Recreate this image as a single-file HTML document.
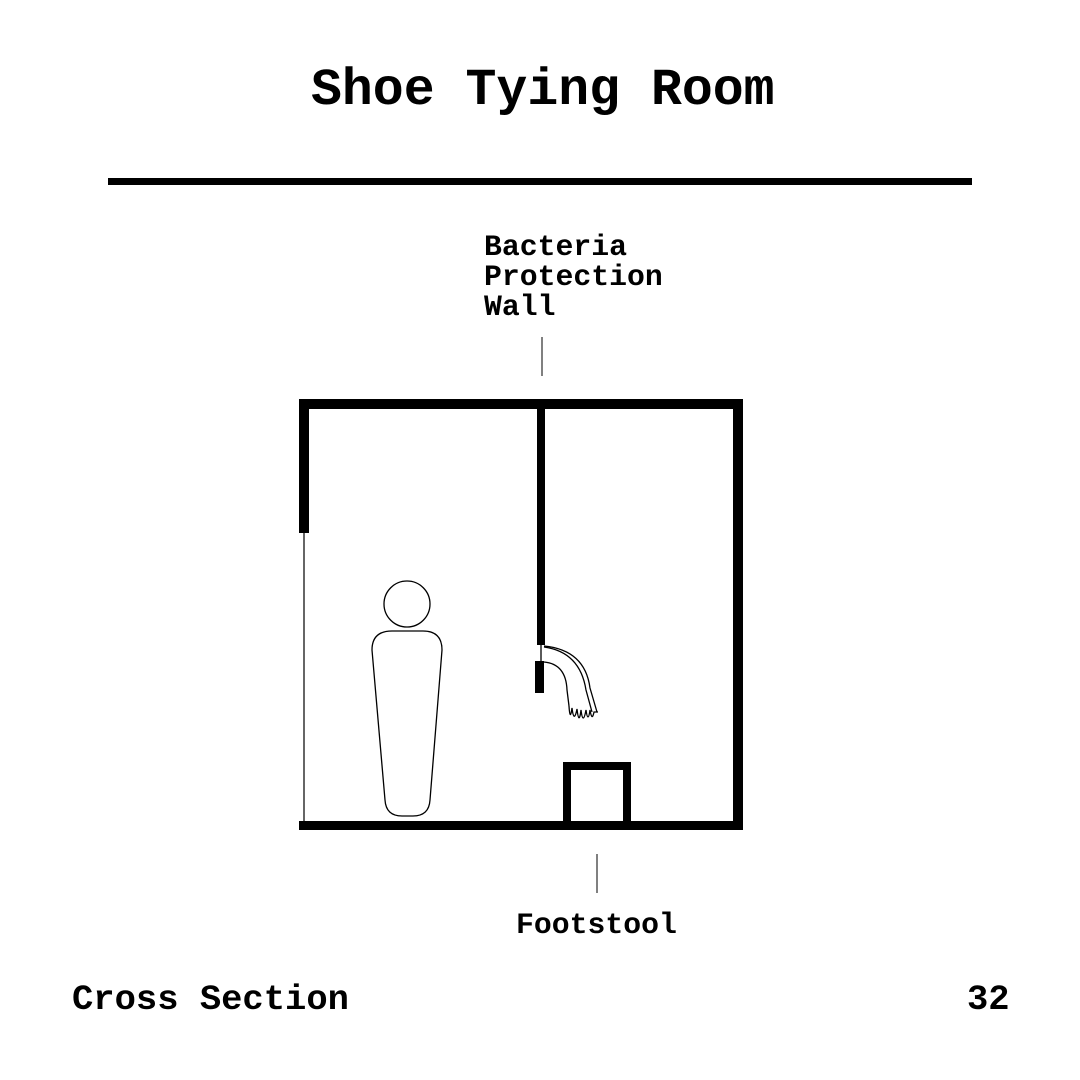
<!DOCTYPE html>
<html><head><meta charset="utf-8"><style>
html,body{margin:0;padding:0;background:#fff;}
body{width:1080px;height:1080px;position:relative;overflow:hidden;font-family:"Liberation Mono",monospace;font-weight:bold;color:#000;}
.t{position:absolute;white-space:nowrap;line-height:1;}
</style></head><body>
<div class="t" style="left:311px;top:66px;font-size:51.5px;">Shoe Tying Room</div>
<div style="position:absolute;left:108px;top:178px;width:864px;height:7px;background:#000;"></div>
<div class="t" style="left:484px;top:232px;font-size:29.8px;line-height:30px;">Bacteria<br>Protection<br>Wall</div>
<div class="t" style="left:516px;top:911px;font-size:29.8px;">Footstool</div>
<div class="t" style="left:72px;top:982px;font-size:35.5px;">Cross Section</div>
<div class="t" style="left:967px;top:982px;font-size:35.5px;">32</div>
<svg width="1080" height="1080" style="position:absolute;left:0;top:0" xmlns="http://www.w3.org/2000/svg">
<g fill="#000">
<rect x="299" y="399" width="444" height="10"/>
<rect x="299" y="399" width="10" height="134"/>
<rect x="733" y="399" width="10" height="431"/>
<rect x="299" y="821" width="444" height="9"/>
<rect x="537" y="409" width="8" height="236"/>
<rect x="535" y="661" width="9" height="32"/>
<rect x="563" y="762" width="68" height="8"/>
<rect x="563" y="762" width="8" height="64"/>
<rect x="623" y="762" width="8" height="64"/>
</g>
<line x1="304" y1="533" x2="304" y2="821" stroke="#000" stroke-width="1.2"/>
<line x1="542" y1="337" x2="542" y2="376" stroke="#000" stroke-width="1"/>
<line x1="597" y1="854" x2="597" y2="893" stroke="#000" stroke-width="1"/>
<g fill="none" stroke="#000" stroke-width="1.3">
<circle cx="407" cy="604" r="23"/>
<path d="M392 631 H423 Q442 631 442 650 L430 800 Q429 816 413 816 H402 Q386 816 385 800 L372 650 Q372 631 392 631 Z"/>
<line x1="541" y1="645" x2="541" y2="661"/>
<path d="M544 646 Q585 650 590 688 L597 712"/>
<path d="M544 647 Q580 652 586 690 L592 712"/>
<path d="M544 662 Q566 664 567 690 L569 706"/>
<path d="M569 706 Q570 722 572 708 Q574 724 577 709 Q579 726 581 710 Q583 726 586 710 Q588 724 590 710 Q592 722 594 712 L598 712"/>
</g>
</svg>
</body></html>
